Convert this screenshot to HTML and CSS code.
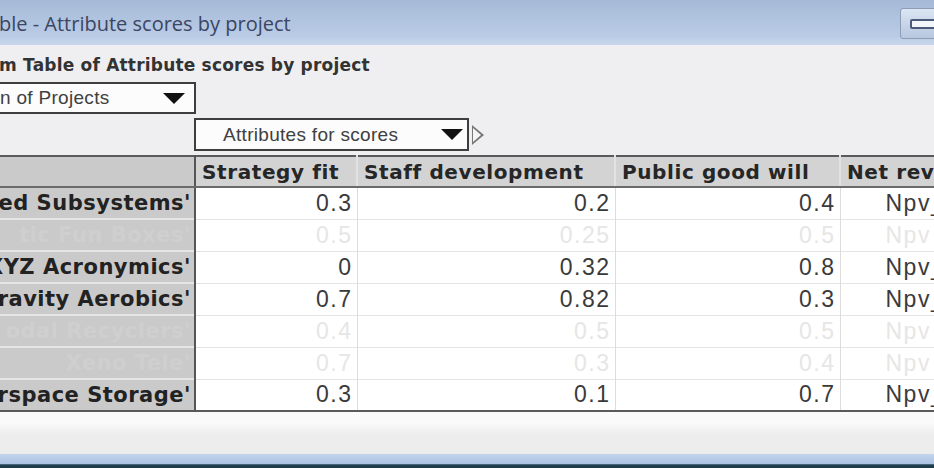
FILE: index.html
```html
<!DOCTYPE html>
<html lang="en">
<head>
    <meta charset="UTF-8">
    <title>Attribute scores by project</title>
    <link rel="stylesheet" href="styles.css">
</head>
<body>

    <!-- Window title bar -->
    <div class="titlebar">
        <span class="title">ble - Attribute scores by project</span>
        <div class="min-btn"><span></span></div>
    </div>

    <div class="window-body">
        <div class="heading">m Table of Attribute scores by project</div>

        <div class="select select-rows">
            <span>n of Projects</span>
            <span class="arrow"></span>
        </div>

        <div class="select-line">
            <div class="select select-cols">
                <span>Attributes for scores</span>
                <span class="arrow"></span>
            </div>
            <div class="step-btn"></div>
        </div>

        <!-- Score table -->
        <table class="scores">
            <tr class="head">
                <th class="label"></th>
                <th class="c1">Strategy fit</th>
                <th class="c2">Staff development</th>
                <th class="c3">Public good will</th>
                <th class="c4">Net rev</th>
            </tr>
            <tr>
                <td class="label"><div>ed Subsystems'</div></td>
                <td>0.3</td><td>0.2</td><td>0.4</td><td class="txt">Npv_</td>
            </tr>
            <tr class="faded">
                <td class="label"><div>tic Fun Boxes'</div></td>
                <td>0.5</td><td>0.25</td><td>0.5</td><td class="txt">Npv</td>
            </tr>
            <tr>
                <td class="label"><div>'XYZ Acronymics'</div></td>
                <td>0</td><td>0.32</td><td>0.8</td><td class="txt">Npv_</td>
            </tr>
            <tr>
                <td class="label"><div>'Gravity Aerobics'</div></td>
                <td>0.7</td><td>0.82</td><td>0.3</td><td class="txt">Npv_</td>
            </tr>
            <tr class="faded">
                <td class="label"><div>odal Recyclers'</div></td>
                <td>0.4</td><td>0.5</td><td>0.5</td><td class="txt">Npv</td>
            </tr>
            <tr class="faded">
                <td class="label"><div>Xeno Tele'</div></td>
                <td>0.7</td><td>0.3</td><td>0.4</td><td class="txt">Npv</td>
            </tr>
            <tr>
                <td class="label"><div>rspace Storage'</div></td>
                <td>0.3</td><td>0.1</td><td>0.7</td><td class="txt">Npv_</td>
            </tr>
        </table>

        <div class="spacer"></div>
    </div>

    <div class="taskbar"></div>

</body>
</html>
```

FILE: styles.css
```css
body {
    margin: 0;
    padding: 0;
    width: 934px;
    height: 468px;
    overflow: hidden;
    background-color: #efeff1;
    font-family: "DejaVu Sans", Verdana, sans-serif;
    display: flex;
    flex-direction: column;
}

/* Title bar */
.titlebar {
    height: 45px;
    flex-shrink: 0;
    background: linear-gradient(#a6bad8, #b9cbe5 80%, #c9d7ec);
    display: flex;
    align-items: center;
    justify-content: space-between;
}

.title {
    font-family: "Open Sans", sans-serif;
    font-size: 20px;
    color: #3a4662;
    margin-left: -1px;
    margin-top: 2px;
}

.min-btn {
    width: 40px;
    height: 31px;
    margin-right: -6px;
    margin-top: 2px;
    border: 1px solid #8e9cb4;
    border-radius: 3px;
    background: linear-gradient(#dbe5f3, #b7c7df);
    display: flex;
    align-items: center;
    padding-left: 9px;
    box-sizing: border-box;
}

.min-btn span {
    width: 24px;
    height: 6px;
    border: 2px solid #4a5a78;
    border-radius: 2px;
    background: #f2f5fa;
}

/* Body */
.window-body {
    flex: 1;
    display: flex;
    flex-direction: column;
}

.heading {
    font-size: 17px;
    font-weight: bold;
    letter-spacing: 0.2px;
    color: #333;
    margin-top: 10px;
    height: 27px;
    margin-left: -1px;
}

.select {
    display: flex;
    align-items: center;
    justify-content: space-between;
    border: 2px solid #3e3e3e;
    background-color: #fcfcfc;
    box-sizing: border-box;
    font-family: "Liberation Sans", Arial, sans-serif;
    font-size: 19px;
    letter-spacing: 0.3px;
    color: #404040;
}

.select-rows {
    width: 196px;
    height: 32px;
    border-left: none;
    padding-right: 9px;
}

.select-line {
    display: flex;
    align-items: center;
    margin-top: 4px;
}

.select-cols {
    width: 275px;
    height: 33px;
    margin-left: 194px;
    padding: 0 4px 0 27px;
}

.arrow {
    width: 0;
    height: 0;
    border-left: 11px solid transparent;
    border-right: 11px solid transparent;
    border-top: 11px solid #111;
}

.step-btn {
    width: 0;
    height: 0;
    margin-left: 3px;
    border-top: 10px solid transparent;
    border-bottom: 10px solid transparent;
    border-left: 12px solid #777;
    position: relative;
}

.step-btn::after {
    content: "";
    position: absolute;
    left: -11px;
    top: -7px;
    border-top: 7px solid transparent;
    border-bottom: 7px solid transparent;
    border-left: 8px solid #f4f4f4;
}

/* Table */
.scores {
    border-collapse: collapse;
    margin-top: 4px;
    table-layout: fixed;
    width: 1000px;
    border-top: 2px solid #5a5a5a;
    border-bottom: 2px solid #5a5a5a;
    background-color: #fff;
}

.scores th,
.scores td {
    height: 32px;
    padding: 0 4px;
    white-space: nowrap;
    overflow: hidden;
    box-sizing: border-box;
}

.scores th {
    height: 31px;
    background-color: #d3d3d3;
    text-align: left;
    font-size: 20px;
    font-weight: bold;
    letter-spacing: 0.6px;
    color: #262626;
    border-bottom: 2px solid #6a6a6a;
    border-left: 2px solid #e2e2e2;
    padding-left: 6px;
}

.scores td {
    text-align: right;
    font-family: "Liberation Sans", Arial, sans-serif;
    font-size: 23px;
    letter-spacing: 1.5px;
    color: #3a3a3a;
    border-top: 1px solid #e4e4e4;
    border-left: 1px solid #dcdcdc;
}

.scores .label {
    width: 195px;
    background-color: #cacaca;
    border-right: 2px solid #555;
    border-left: none;
    padding: 0 3px 0 0;
}

.scores td.label {
    border-top: 2px solid #e6e6e6;
    font-family: "DejaVu Sans", Verdana, sans-serif;
    font-size: 21px;
    font-weight: bold;
    letter-spacing: 0.5px;
    color: #222;
}

.scores td.label div {
    display: flex;
    justify-content: flex-end;
    overflow: hidden;
}

.scores .c1 { width: 162px; }
.scores .c2 { width: 258px; }
.scores .c3 { width: 225px; }
.scores .c4 { width: 160px; }

.scores td.txt {
    text-align: left;
    padding-left: 45px;
}

.faded td {
    color: #e6e6e6;
}

.faded td.label {
    color: #cfcfcf;
}

.spacer {
    flex: 1;
    background: linear-gradient(#fafafa 25%, #ededee 55%, #ececec);
}

.taskbar {
    height: 14px;
    flex-shrink: 0;
    background: linear-gradient(#c4d4ec, #aac2e2 72%, #234454 76%, #1c3744);
}
```
